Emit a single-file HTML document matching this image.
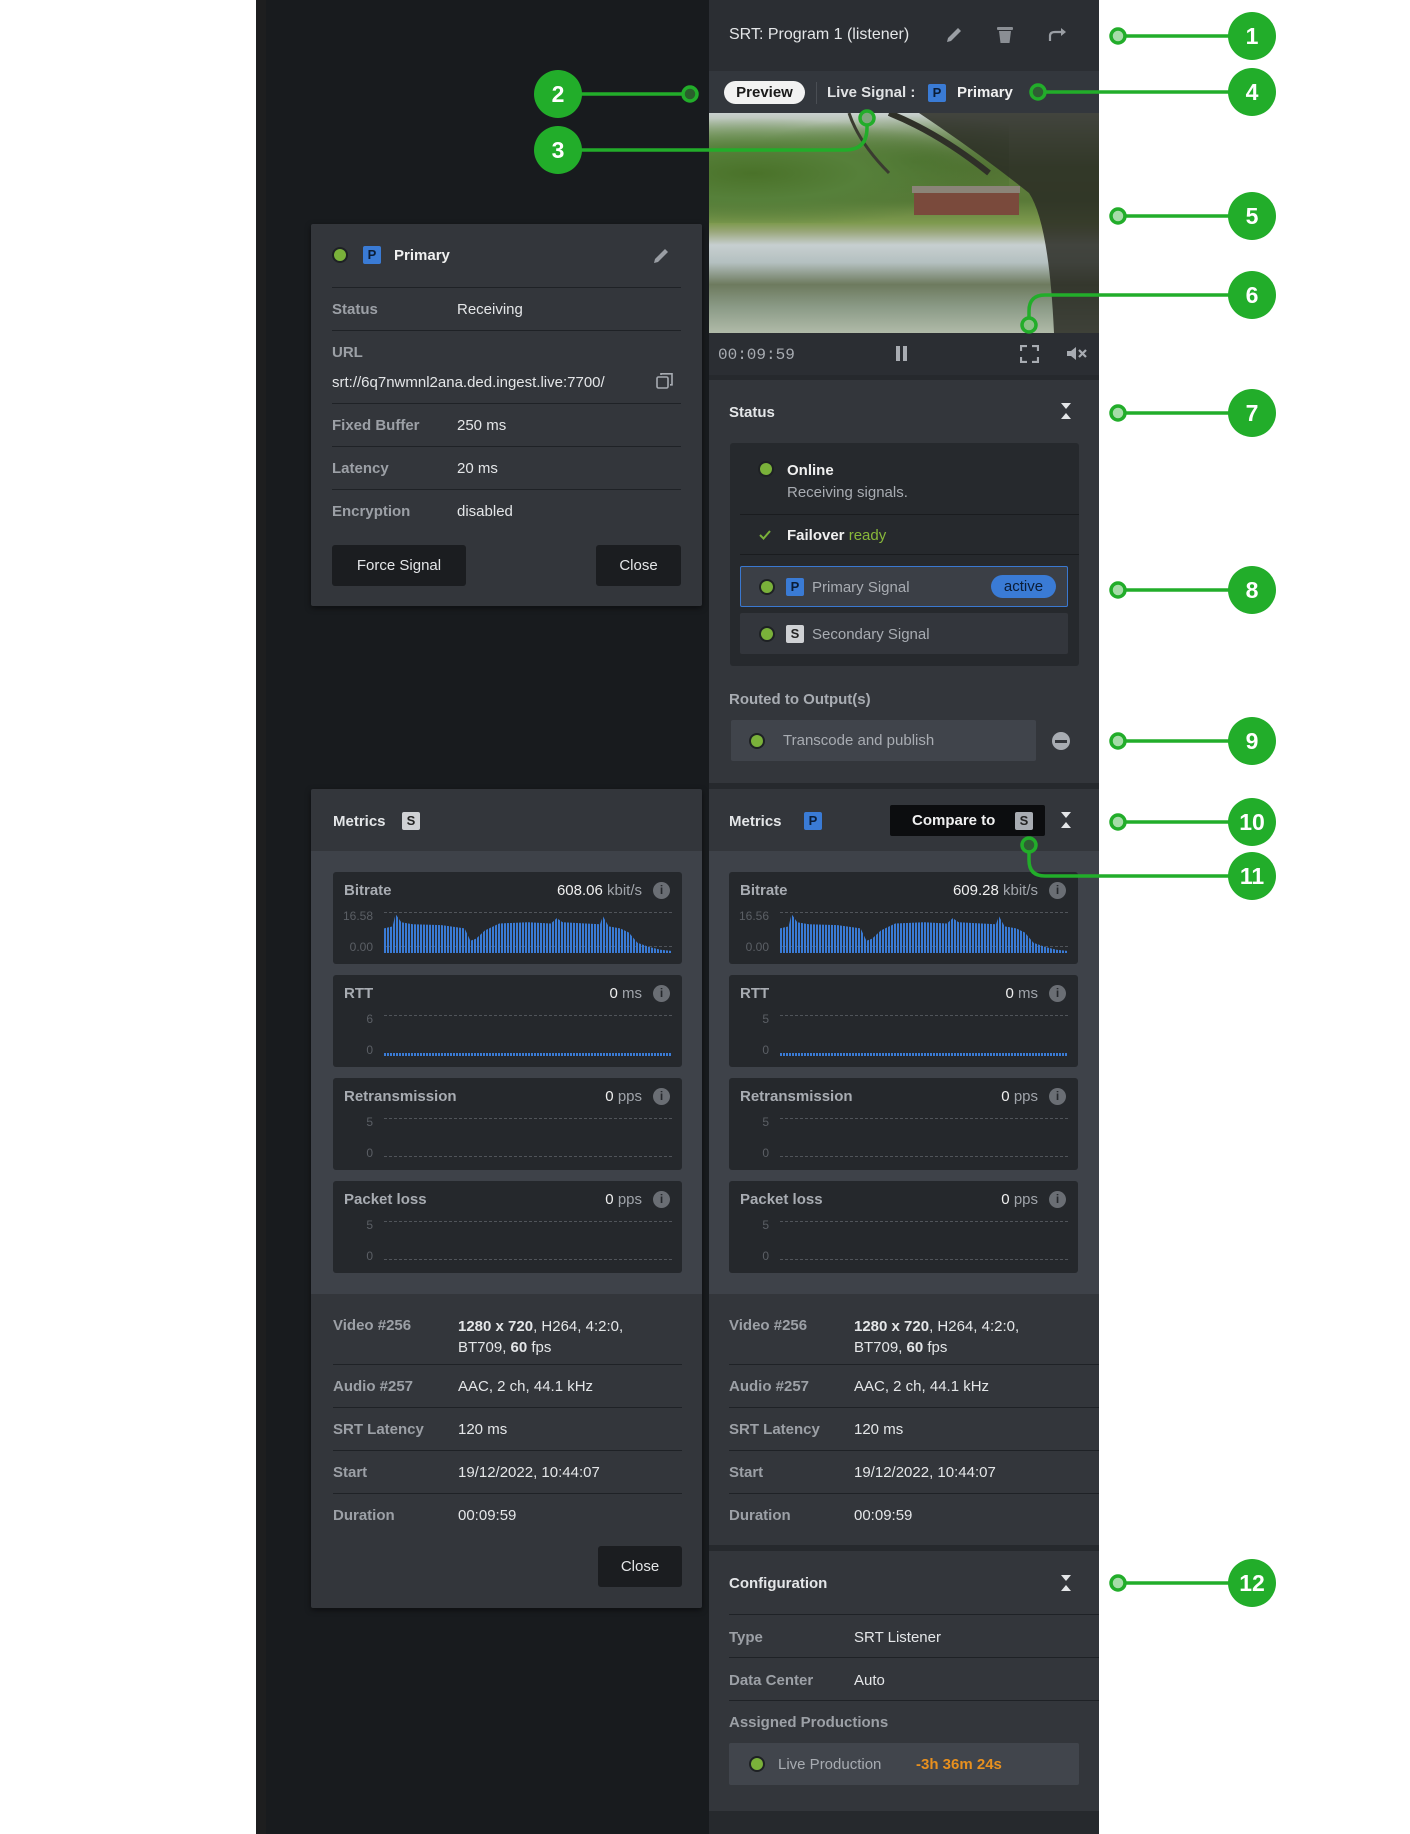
<!DOCTYPE html>
<html><head><meta charset="utf-8">
<style>
*{box-sizing:border-box;margin:0;padding:0}
body{width:1410px;height:1834px;background:#fff;position:relative;overflow:hidden;font-family:"Liberation Sans",sans-serif;font-size:15px;line-height:20px;color:#e4e6e8}
.a{position:absolute}
.lbl{color:#9ca0a6}
.val{color:#e4e6e8}
.b{font-weight:bold}
.sep{position:absolute;height:1px;background:#1f2226}
.dot{position:absolute;width:12px;height:12px;border-radius:50%;background:#7ab13a;box-shadow:0 0 0 2px #1e2124}
.badge{position:absolute;width:18px;height:18px;font-size:13px;font-weight:bold;line-height:18px;text-align:center;border-radius:2px}
.bp{background:#3a7bd5;color:#0b1d36}
.bs{background:#cfd1d4;color:#222}
.btn{position:absolute;background:#1b1d20;color:#e4e6e8;border-radius:3px;text-align:center;line-height:41px;height:41px}
.card{position:absolute;background:#25282c;border-radius:3px;width:349px;height:92px}
.card .t{position:absolute;left:11px;top:9px;color:#a8acb2;font-weight:bold;font-size:15px}
.card .v{position:absolute;right:40px;top:9px;color:#f0f0f0;font-size:15px}
.card .v span{color:#a0a4aa}
.card .i{position:absolute;right:12px;top:10px;width:17px;height:17px;border-radius:50%;background:#6a6e74;color:#25282c;font-size:12px;font-weight:bold;text-align:center;line-height:17px}
.card .yl{position:absolute;width:40px;text-align:right;color:#5b5f65;font-size:12px;line-height:14px}
.card .dl{position:absolute;left:51px;right:10px;border-top:1px dashed #50545a}
.bars{position:absolute;left:51px;right:10px;background:repeating-linear-gradient(90deg,#3a7bd5 0 2px,transparent 2px 3px)}
.ico{position:absolute}
</style></head><body>

<div class="a" style="left:256px;top:0;width:453px;height:1834px;background:#181b1e"></div>
<div class="a" style="left:256px;top:0;width:10px;height:1834px;background:#1d1e1f"></div>
<div class="a" style="left:709px;top:0;width:390px;height:1834px;background:#26292d"></div>

<!-- header -->
<div class="a" style="left:709px;top:0;width:390px;height:71px;background:#2b2e33"></div>
<div class="a" style="left:729px;top:25px;font-size:16px;color:#e4e6e8">SRT: Program 1 (listener)</div>
<svg class="ico" style="left:944px;top:25px" width="20" height="20" viewBox="0 0 20 20"><path d="M3 17l1-4L14 3l3 3L7 16z" fill="#9a9ea4"/></svg>
<svg class="ico" style="left:996px;top:25px" width="18" height="20" viewBox="0 0 18 20"><rect x="1" y="2" width="16" height="3" rx="1" fill="#8a8e94"/><path d="M3 6h12l-1.5 12h-9z" fill="#8a8e94"/></svg>
<svg class="ico" style="left:1047px;top:26px" width="22" height="16" viewBox="0 0 22 16"><path d="M3 15V10Q3 6 8 6H17" stroke="#9a9ea4" stroke-width="2.2" fill="none"/><path d="M14 2l5 4-5 4z" fill="#9a9ea4"/></svg>

<!-- preview bar -->
<div class="a" style="left:709px;top:71px;width:390px;height:42px;background:#33373d"></div>
<div class="a" style="left:724px;top:81px;width:81px;height:23px;background:#f2f2f2;border-radius:12px;color:#1a1a1a;font-weight:bold;text-align:center;line-height:23px;font-size:15px">Preview</div>
<div class="a" style="left:816px;top:82px;width:1px;height:22px;background:#4a4e54"></div>
<div class="a" style="left:827px;top:83px;color:#e0e2e4;font-weight:bold;font-size:15px">Live Signal :</div>
<div class="badge bp" style="left:928px;top:84px">P</div>
<div class="a" style="left:957px;top:83px;color:#f0f0f0;font-weight:bold">Primary</div>

<!-- video -->
<div class="a" style="left:709px;top:113px;width:390px;height:220px;overflow:hidden;background:linear-gradient(180deg,#c9d0cf 0%,#9bb08c 10%,#5f7e3e 25%,#5a7a38 40%,#7e9a4e 50%,#9aa77b 54%,#c7cfd0 60%,#b4c0c0 68%,#6d7a5e 78%,#8a9a86 88%,#b0baa8 100%)">
 <div class="a" style="left:-20px;top:0;width:320px;height:110px;background:radial-gradient(ellipse at 20% 55%,#4a7229 0,#56803a 30%,transparent 65%),radial-gradient(ellipse at 70% 45%,#476b2a 0,transparent 55%)"></div>
 <div class="a" style="left:205px;top:78px;width:105px;height:24px;background:#7a4a3c"></div>
 <div class="a" style="left:203px;top:73px;width:108px;height:7px;background:#8b8478"></div>
 <svg class="a" style="left:0;top:0" width="390" height="220" viewBox="0 0 390 220"><path d="M210 0Q270 40 320 80Q340 110 345 220H390V0Z" fill="#2a2c24" opacity=".85"/><path d="M180 0Q230 20 280 60" stroke="#2f3028" stroke-width="6" fill="none"/><path d="M140 0Q150 30 180 60" stroke="#3a3b30" stroke-width="3" fill="none"/></svg>
</div>

<!-- controls -->
<div class="a" style="left:709px;top:333px;width:390px;height:42px;background:#2b2e33"></div>
<div class="a" style="left:718px;top:345px;color:#a8acb2;font-family:'Liberation Mono',monospace;font-size:16px">00:09:59</div>
<div class="a" style="left:896px;top:346px;width:4px;height:15px;background:#a8acb2"></div>
<div class="a" style="left:903px;top:346px;width:4px;height:15px;background:#a8acb2"></div>
<svg class="ico" style="left:1020px;top:345px" width="19" height="18" viewBox="0 0 19 18"><path d="M1 6V1h6M12 1h6v5M18 12v5h-6M7 17H1v-5" stroke="#a8acb2" stroke-width="2.2" fill="none"/></svg>
<svg class="ico" style="left:1066px;top:346px" width="22" height="15" viewBox="0 0 22 15"><path d="M1 5h4l5-4v13l-5-4H1z" fill="#a8acb2"/><path d="M13 4l7 7M20 4l-7 7" stroke="#a8acb2" stroke-width="2.2"/></svg>

<!-- status section -->
<div class="a" style="left:709px;top:380px;width:390px;height:403px;background:#33363b"></div>
<div class="a b" style="left:729px;top:403px">Status</div>
<svg class="ico" style="left:1060px;top:402px" width="12" height="18" viewBox="0 0 12 18"><path d="M1 1h10L6 7z M1 17h10L6 11z" fill="#e4e6e8"/></svg>
<div class="a" style="left:730px;top:443px;width:349px;height:223px;background:#26292d;border-radius:3px"></div>
<div class="dot" style="left:760px;top:463px"></div>
<div class="a b" style="left:787px;top:461px;color:#f0f0f0">Online</div>
<div class="a" style="left:787px;top:483px;color:#a8acb2">Receiving signals.</div>
<div class="sep" style="left:740px;top:514px;width:339px;background:#1a1c1f"></div>
<svg class="ico" style="left:759px;top:530px" width="12" height="10" viewBox="0 0 12 10"><path d="M1 5l3.5 3.5L11 1" stroke="#7ab13a" stroke-width="2" fill="none"/></svg>
<div class="a b" style="left:787px;top:526px;color:#f0f0f0">Failover <span style="color:#88b83a;font-weight:normal">ready</span></div>
<div class="sep" style="left:740px;top:554px;width:339px;background:#1a1c1f"></div>
<div class="a" style="left:740px;top:566px;width:328px;height:41px;background:#3b3f46;border:1px solid #3a78d0;border-radius:2px"></div>
<div class="dot" style="left:761px;top:581px"></div>
<div class="badge bp" style="left:786px;top:578px">P</div>
<div class="a" style="left:812px;top:578px;color:#a8acb2">Primary Signal</div>
<div class="a" style="left:991px;top:575px;width:65px;height:23px;border-radius:12px;background:#3a7bd5;color:#0b1d36;text-align:center;line-height:23px;font-size:15px">active</div>
<div class="a" style="left:740px;top:613px;width:328px;height:41px;background:#33363c;border-radius:2px"></div>
<div class="dot" style="left:761px;top:628px"></div>
<div class="badge bs" style="left:786px;top:625px">S</div>
<div class="a" style="left:812px;top:625px;color:#a8acb2">Secondary Signal</div>
<div class="a b" style="left:729px;top:690px;color:#a8acb2">Routed to Output(s)</div>
<div class="a" style="left:731px;top:720px;width:305px;height:41px;background:#40444b;border-radius:2px"></div>
<div class="dot" style="left:751px;top:735px"></div>
<div class="a" style="left:783px;top:731px;color:#a8acb2">Transcode and publish</div>
<div class="a" style="left:1052px;top:732px;width:18px;height:18px;border-radius:50%;background:#a8acb2"></div>
<div class="a" style="left:1055px;top:740px;width:12px;height:3px;background:#33363b"></div>

<!-- right metrics -->
<div class="a" style="left:709px;top:789px;width:390px;height:62px;background:#33363b"></div>
<div class="a b" style="left:729px;top:812px">Metrics</div>
<div class="badge bp" style="left:804px;top:812px">P</div>
<div class="a" style="left:890px;top:805px;width:155px;height:31px;background:#0c0d0f;border-radius:2px"></div>
<div class="a b" style="left:912px;top:811px;color:#f0f0f0">Compare to</div>
<div class="badge bs" style="left:1015px;top:812px;background:#a8acb2">S</div>
<svg class="ico" style="left:1060px;top:811px" width="12" height="18" viewBox="0 0 12 18"><path d="M1 1h10L6 7z M1 17h10L6 11z" fill="#e4e6e8"/></svg>
<div class="a" style="left:709px;top:851px;width:390px;height:443px;background:#3e4249"></div>

<!-- left metrics panel -->
<div class="a" style="left:311px;top:789px;width:391px;height:819px;background:#33363b;border-radius:2px;box-shadow:0 2px 6px rgba(0,0,0,.5)"></div>
<div class="a b" style="left:333px;top:812px">Metrics</div>
<div class="badge bs" style="left:402px;top:812px">S</div>
<div class="a" style="left:311px;top:851px;width:391px;height:443px;background:#3e4249"></div>

<div class="card" style="left:333px;top:872px"><div class="t">Bitrate</div><div class="v">608.06 <span>kbit/s</span></div><div class="i">i</div>
 <div class="yl" style="top:37px">16.58</div><div class="yl" style="top:68px">0.00</div>
 <div class="dl" style="top:40px"></div><div class="dl" style="top:74px"></div>
 <div class="bars" style="top:40px;height:41px;clip-path:polygon(0 40%,3% 35%,4% 5%,6% 25%,10% 30%,20% 32%,28% 40%,30% 70%,32% 65%,35% 45%,40% 28%,50% 25%,58% 28%,60% 15%,62% 25%,75% 30%,76% 10%,78% 35%,82% 40%,85% 50%,88% 75%,92% 85%,96% 92%,100% 95%,100% 100%,0 100%)"></div></div>
<div class="card" style="left:333px;top:975px"><div class="t">RTT</div><div class="v">0 <span>ms</span></div><div class="i">i</div>
 <div class="yl" style="top:37px">6</div><div class="yl" style="top:68px">0</div>
 <div class="dl" style="top:40px"></div><div class="bars" style="top:78px;height:3px"></div></div>
<div class="card" style="left:333px;top:1078px"><div class="t">Retransmission</div><div class="v">0 <span>pps</span></div><div class="i">i</div>
 <div class="yl" style="top:37px">5</div><div class="yl" style="top:68px">0</div>
 <div class="dl" style="top:40px"></div><div class="dl" style="top:78px"></div></div>
<div class="card" style="left:333px;top:1181px"><div class="t">Packet loss</div><div class="v">0 <span>pps</span></div><div class="i">i</div>
 <div class="yl" style="top:37px">5</div><div class="yl" style="top:68px">0</div>
 <div class="dl" style="top:40px"></div><div class="dl" style="top:78px"></div></div>
<div class="card" style="left:729px;top:872px"><div class="t">Bitrate</div><div class="v">609.28 <span>kbit/s</span></div><div class="i">i</div>
 <div class="yl" style="top:37px">16.56</div><div class="yl" style="top:68px">0.00</div>
 <div class="dl" style="top:40px"></div><div class="dl" style="top:74px"></div>
 <div class="bars" style="top:40px;height:41px;clip-path:polygon(0 40%,3% 35%,4% 5%,6% 25%,10% 30%,20% 32%,28% 40%,30% 70%,32% 65%,35% 45%,40% 28%,50% 25%,58% 28%,60% 15%,62% 25%,75% 30%,76% 10%,78% 35%,82% 40%,85% 50%,88% 75%,92% 85%,96% 92%,100% 95%,100% 100%,0 100%)"></div></div>
<div class="card" style="left:729px;top:975px"><div class="t">RTT</div><div class="v">0 <span>ms</span></div><div class="i">i</div>
 <div class="yl" style="top:37px">5</div><div class="yl" style="top:68px">0</div>
 <div class="dl" style="top:40px"></div><div class="bars" style="top:78px;height:3px"></div></div>
<div class="card" style="left:729px;top:1078px"><div class="t">Retransmission</div><div class="v">0 <span>pps</span></div><div class="i">i</div>
 <div class="yl" style="top:37px">5</div><div class="yl" style="top:68px">0</div>
 <div class="dl" style="top:40px"></div><div class="dl" style="top:78px"></div></div>
<div class="card" style="left:729px;top:1181px"><div class="t">Packet loss</div><div class="v">0 <span>pps</span></div><div class="i">i</div>
 <div class="yl" style="top:37px">5</div><div class="yl" style="top:68px">0</div>
 <div class="dl" style="top:40px"></div><div class="dl" style="top:78px"></div></div>

<!-- details -->
<div class="a" style="left:709px;top:1294px;width:390px;height:251px;background:#33363b"></div>
<div class="a lbl b" style="left:333px;top:1316px">Video #256</div><div class="a val" style="left:458px;top:1316px;line-height:21px"><b>1280 x 720</b>, H264, 4:2:0,<br>BT709, <b>60</b> fps</div>
<div class="sep" style="left:333px;top:1364px;width:349px"></div>
<div class="a lbl b" style="left:333px;top:1377px">Audio #257</div><div class="a val" style="left:458px;top:1377px">AAC, 2 ch, 44.1 kHz</div>
<div class="sep" style="left:333px;top:1407px;width:349px"></div>
<div class="a lbl b" style="left:333px;top:1420px">SRT Latency</div><div class="a val" style="left:458px;top:1420px">120 ms</div>
<div class="sep" style="left:333px;top:1450px;width:349px"></div>
<div class="a lbl b" style="left:333px;top:1463px">Start</div><div class="a val" style="left:458px;top:1463px">19/12/2022, 10:44:07</div>
<div class="sep" style="left:333px;top:1493px;width:349px"></div>
<div class="a lbl b" style="left:333px;top:1506px">Duration</div><div class="a val" style="left:458px;top:1506px">00:09:59</div>
<div class="btn" style="left:598px;top:1546px;width:84px">Close</div>
<div class="a lbl b" style="left:729px;top:1316px">Video #256</div><div class="a val" style="left:854px;top:1316px;line-height:21px"><b>1280 x 720</b>, H264, 4:2:0,<br>BT709, <b>60</b> fps</div>
<div class="sep" style="left:729px;top:1364px;width:370px"></div>
<div class="a lbl b" style="left:729px;top:1377px">Audio #257</div><div class="a val" style="left:854px;top:1377px">AAC, 2 ch, 44.1 kHz</div>
<div class="sep" style="left:729px;top:1407px;width:370px"></div>
<div class="a lbl b" style="left:729px;top:1420px">SRT Latency</div><div class="a val" style="left:854px;top:1420px">120 ms</div>
<div class="sep" style="left:729px;top:1450px;width:370px"></div>
<div class="a lbl b" style="left:729px;top:1463px">Start</div><div class="a val" style="left:854px;top:1463px">19/12/2022, 10:44:07</div>
<div class="sep" style="left:729px;top:1493px;width:370px"></div>
<div class="a lbl b" style="left:729px;top:1506px">Duration</div><div class="a val" style="left:854px;top:1506px">00:09:59</div>

<!-- configuration -->
<div class="a" style="left:709px;top:1551px;width:390px;height:260px;background:#33363b"></div>
<div class="a b" style="left:729px;top:1574px">Configuration</div>
<svg class="ico" style="left:1060px;top:1574px" width="12" height="18" viewBox="0 0 12 18"><path d="M1 1h10L6 7z M1 17h10L6 11z" fill="#e4e6e8"/></svg>
<div class="sep" style="left:729px;top:1614px;width:370px"></div>
<div class="a lbl b" style="left:729px;top:1628px">Type</div><div class="a val" style="left:854px;top:1628px">SRT Listener</div>
<div class="sep" style="left:729px;top:1657px;width:370px"></div>
<div class="a lbl b" style="left:729px;top:1671px">Data Center</div><div class="a val" style="left:854px;top:1671px">Auto</div>
<div class="sep" style="left:729px;top:1700px;width:370px"></div>
<div class="a lbl b" style="left:729px;top:1713px">Assigned Productions</div>
<div class="a" style="left:729px;top:1743px;width:350px;height:42px;background:#41454c;border-radius:2px"></div>
<div class="dot" style="left:751px;top:1758px"></div>
<div class="a" style="left:778px;top:1755px;color:#a8acb2">Live Production</div>
<div class="a b" style="left:916px;top:1755px;color:#e8901e">-3h 36m 24s</div>

<!-- left signal card -->
<div class="a" style="left:311px;top:224px;width:391px;height:382px;background:#33363b;border-radius:2px;box-shadow:0 2px 6px rgba(0,0,0,.5)"></div>
<div class="dot" style="left:334px;top:249px"></div>
<div class="badge bp" style="left:363px;top:246px">P</div>
<div class="a b" style="left:394px;top:246px;color:#f0f0f0">Primary</div>
<svg class="ico" style="left:651px;top:246px" width="20" height="20" viewBox="0 0 20 20"><path d="M3 17l1-4L14 3l3 3L7 16z" fill="#9a9ea4"/></svg>
<div class="sep" style="left:332px;top:287px;width:349px"></div>
<div class="a lbl b" style="left:332px;top:300px">Status</div><div class="a val" style="left:457px;top:300px">Receiving</div>
<div class="sep" style="left:332px;top:330px;width:349px"></div>
<div class="a lbl b" style="left:332px;top:343px">URL</div>
<div class="a val" style="left:332px;top:373px">srt://6q7nwmnl2ana.ded.ingest.live:7700/</div>
<svg class="ico" style="left:656px;top:372px" width="18" height="18" viewBox="0 0 18 18"><rect x="1" y="5" width="11" height="11" rx="1.5" stroke="#a8acb2" stroke-width="1.6" fill="none"/><path d="M5 3V1.8h11v11H14" stroke="#a8acb2" stroke-width="1.6" fill="none"/></svg>
<div class="sep" style="left:332px;top:403px;width:349px"></div>
<div class="a lbl b" style="left:332px;top:416px">Fixed Buffer</div><div class="a val" style="left:457px;top:416px">250 ms</div>
<div class="sep" style="left:332px;top:446px;width:349px"></div>
<div class="a lbl b" style="left:332px;top:459px">Latency</div><div class="a val" style="left:457px;top:459px">20 ms</div>
<div class="sep" style="left:332px;top:489px;width:349px"></div>
<div class="a lbl b" style="left:332px;top:502px">Encryption</div><div class="a val" style="left:457px;top:502px">disabled</div>
<div class="btn" style="left:332px;top:545px;width:134px">Force Signal</div>
<div class="btn" style="left:596px;top:545px;width:85px">Close</div>

<!-- annotations -->
<svg class="a" style="left:0;top:0" width="1410" height="1834" viewBox="0 0 1410 1834">
<g stroke="#22ad2a" stroke-width="3.5" fill="none">
<path d="M1118 36H1252"/><path d="M558 94H690"/><path d="M558 150H845Q867 150 867 128V118"/>
<path d="M1038 92H1252"/><path d="M1118 216H1252"/><path d="M1029 325V311Q1029 295 1045 295H1252"/>
<path d="M1118 413H1252"/><path d="M1118 590H1252"/><path d="M1118 741H1252"/><path d="M1118 822H1252"/>
<path d="M1029 845V860Q1029 876 1045 876H1252"/><path d="M1118 1583H1252"/>
</g>
<g stroke="#22ad2a" stroke-width="3.5">
<circle cx="1118" cy="36" r="7" fill="#a6dca8"/><circle cx="690" cy="94" r="7" fill="#2a5e2c"/>
<circle cx="867" cy="118" r="7" fill="#7fa67d"/><circle cx="1038" cy="92" r="7" fill="#2f5e33"/>
<circle cx="1118" cy="216" r="7" fill="#a6dca8"/><circle cx="1029" cy="325" r="7" fill="#8cbf88"/>
<circle cx="1118" cy="413" r="7" fill="#a6dca8"/><circle cx="1118" cy="590" r="7" fill="#a6dca8"/>
<circle cx="1118" cy="741" r="7" fill="#a6dca8"/><circle cx="1118" cy="822" r="7" fill="#a6dca8"/>
<circle cx="1029" cy="845" r="7" fill="#2f5e33"/><circle cx="1118" cy="1583" r="7" fill="#a6dca8"/>
</g>
<g fill="#22ad2a">
<circle cx="1252" cy="36" r="24"/><circle cx="558" cy="94" r="24"/><circle cx="558" cy="150" r="24"/>
<circle cx="1252" cy="92" r="24"/><circle cx="1252" cy="216" r="24"/><circle cx="1252" cy="295" r="24"/>
<circle cx="1252" cy="413" r="24"/><circle cx="1252" cy="590" r="24"/><circle cx="1252" cy="741" r="24"/>
<circle cx="1252" cy="822" r="24"/><circle cx="1252" cy="876" r="24"/><circle cx="1252" cy="1583" r="24"/>
</g>
<g fill="#fff" font-family="Liberation Sans, sans-serif" font-weight="bold" font-size="23" text-anchor="middle">
<text x="1252" y="44">1</text><text x="558" y="102">2</text><text x="558" y="158">3</text>
<text x="1252" y="100">4</text><text x="1252" y="224">5</text><text x="1252" y="303">6</text>
<text x="1252" y="421">7</text><text x="1252" y="598">8</text><text x="1252" y="749">9</text>
<text x="1252" y="830">10</text><text x="1252" y="884">11</text><text x="1252" y="1591">12</text>
</g>
</svg>
</body></html>
